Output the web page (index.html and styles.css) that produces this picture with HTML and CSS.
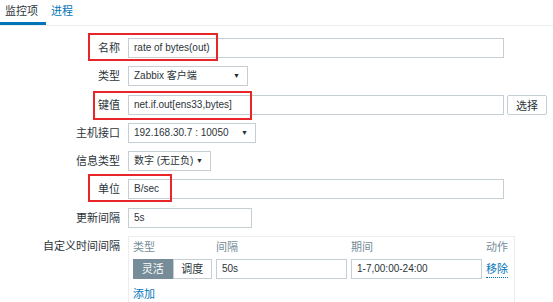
FILE: index.html
```html
<!DOCTYPE html>
<html lang="zh-CN">
<head>
    <meta charset="UTF-8">
    <meta name="viewport" content="width=device-width, initial-scale=1.0">
    <title>监控项</title>
    <link rel="stylesheet" href="styles.css">
</head>
<body>

    <!-- Tabs -->
    <ul class="tabs">
        <li class="tab active">监控项</li>
        <li class="tab">进程</li>
    </ul>

    <!-- Item form -->
    <div class="item-form">
        <label class="form-label">名称</label>
        <div class="form-field"><div class="text-input wide">rate of bytes(out)</div></div>

        <label class="form-label">类型</label>
        <div class="form-field"><div class="select-box type-select"><span>Zabbix 客户端</span><span class="arrow">▼</span></div></div>

        <label class="form-label">键值</label>
        <div class="form-field">
            <div class="text-input wide">net.if.out[ens33,bytes]</div>
            <button class="small-button">选择</button>
        </div>

        <label class="form-label">主机接口</label>
        <div class="form-field"><div class="select-box host-select"><span>192.168.30.7 : 10050</span><span class="arrow">▼</span></div></div>

        <label class="form-label">信息类型</label>
        <div class="form-field"><div class="select-box info-select"><span>数字 (无正负)</span><span class="arrow">▼</span></div></div>

        <label class="form-label">单位</label>
        <div class="form-field"><div class="text-input wide">B/sec</div></div>

        <label class="form-label">更新间隔</label>
        <div class="form-field"><div class="text-input short">5s</div></div>

        <label class="form-label">自定义时间间隔</label>
        <div class="form-field">
            <div class="interval-box">
                <div class="interval-grid">
                    <span class="col-head">类型</span>
                    <span class="col-head">间隔</span>
                    <span class="col-head">期间</span>
                    <span class="col-head">动作</span>

                    <div class="segmented">
                        <span class="seg on">灵活</span>
                        <span class="seg">调度</span>
                    </div>
                    <div class="text-input">50s</div>
                    <div class="text-input">1-7,00:00-24:00</div>
                    <a href="#" class="link-action">移除</a>
                </div>
                <a href="#" class="link-action add-link">添加</a>
            </div>
        </div>

        <!-- red highlight boxes drawn over the form -->
        <div class="mark mark-name"></div>
        <div class="mark mark-key"></div>
        <div class="mark mark-units"></div>
    </div>

</body>
</html>
```

FILE: styles.css
```css
/* General styles */
body {
    font-family: "Liberation Sans", "Noto Sans CJK SC", sans-serif;
    font-size: 11px;
    color: #2b3439;
    margin: 0;
    background-color: #fff;
    overflow: hidden;
}

/* Tabs */
.tabs {
    list-style-type: none;
    margin: 0;
    padding: 0;
    display: flex;
    height: 25px;
    border-bottom: 1px solid #ebeef0;
}

.tab {
    padding: 0 8px 0 5px;
    line-height: 22px;
    color: #0275b8;
    white-space: nowrap;
}

.tab.active {
    color: #2b3439;
    border-bottom: 3px solid #0275b8;
}

/* Form layout */
.item-form {
    position: relative;
    display: grid;
    grid-template-columns: 120px 1fr;
    column-gap: 8px;
    row-gap: 8.3px;
    padding-top: 12px;
}

.form-label {
    text-align: right;
    line-height: 20px;
}

.form-field {
    display: flex;
    align-items: center;
    gap: 3px;
}

.text-input,
.select-box {
    box-sizing: border-box;
    height: 20px;
    line-height: 18px;
    border: 1px solid #c5ced3;
    padding: 0 5px;
    background-color: #fff;
    white-space: nowrap;
    font-size: 10px;
}

.text-input.wide {
    width: 376px;
}

.text-input.short {
    width: 124px;
}

.select-box {
    display: flex;
    justify-content: space-between;
    padding-right: 7px;
}

.select-box .arrow {
    font-size: 7px;
    color: #1f2c33;
}

.type-select { width: 120px; }
.host-select { width: 128px; }
.info-select { width: 83px; }

.small-button {
    font-family: inherit;
    font-size: 11px;
    color: #2b3439;
    height: 20px;
    width: 40px;
    padding: 0;
    background-color: #fff;
    border: 1px solid #c5ced3;
    border-radius: 2px;
}

/* Custom intervals */
.interval-box {
    box-sizing: border-box;
    width: 387px;
    height: 80px;
    border: 1px solid #ebeef0;
    border-bottom: none;
    padding: 2px 4px;
}

.interval-grid {
    display: grid;
    grid-template-columns: 79px 131px 131px auto;
    column-gap: 4px;
    row-gap: 3px;
}

.col-head {
    color: #768d99;
    line-height: 17px;
}

.segmented {
    display: flex;
}

.seg {
    box-sizing: border-box;
    width: 40px;
    height: 20px;
    line-height: 18px;
    text-align: center;
    border: 1px solid #c5ced3;
    background-color: #fff;
}

.seg.on {
    background-color: #768d99;
    border-color: #768d99;
    color: #fff;
}

.link-action {
    color: #0275b8;
    text-decoration: none;
    border-bottom: 1px dotted #0275b8;
    line-height: 16px;
    align-self: center;
    justify-self: start;
}

.add-link {
    display: inline-block;
    margin-top: 7px;
}

/* Red annotation boxes */
.mark {
    position: absolute;
    border: 2px solid #e8262a;
    box-sizing: border-box;
}

.mark-name  { left: 88px; top: 7px;   width: 130px; height: 28px; }
.mark-key   { left: 93px; top: 65px;  width: 159px; height: 29px; }
.mark-units { left: 88px; top: 148px; width: 84px;  height: 28px; }
```
